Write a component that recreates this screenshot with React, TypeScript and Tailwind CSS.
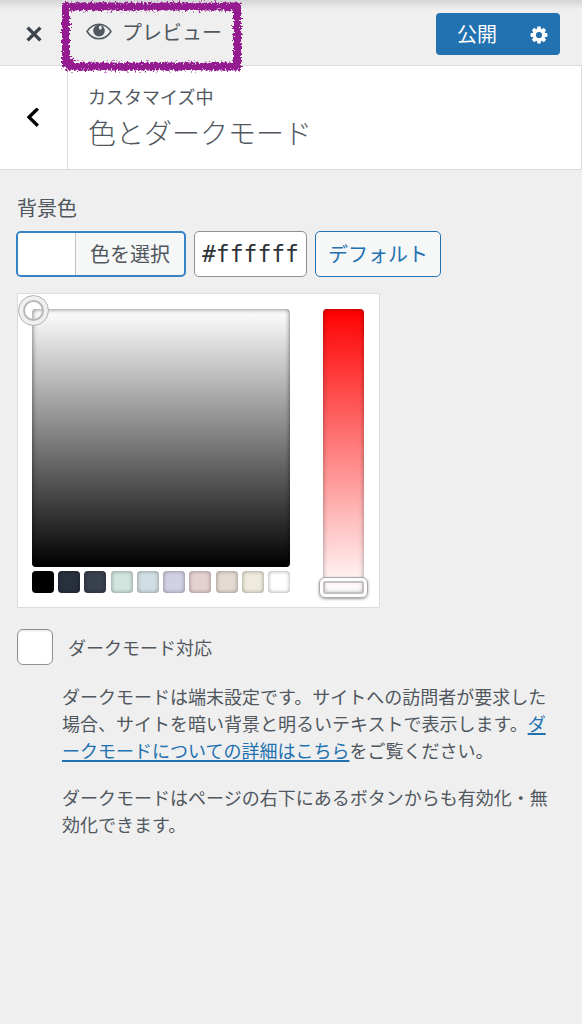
import React, { useState } from 'react';

const swatches = [
  { hex: '#000000', className: 'bg-[#000000]' },
  { hex: '#28303d', className: 'bg-[#28303d]' },
  { hex: '#39414d', className: 'bg-[#39414d]' },
  { hex: '#d1e4dd', className: 'bg-[#d1e4dd]' },
  { hex: '#d1dfe4', className: 'bg-[#d1dfe4]' },
  { hex: '#d1d1e4', className: 'bg-[#d1d1e4]' },
  { hex: '#e4d1d1', className: 'bg-[#e4d1d1]' },
  { hex: '#e4dad1', className: 'bg-[#e4dad1]' },
  { hex: '#eeeadd', className: 'bg-[#eeeadd]' },
  { hex: '#ffffff', className: 'bg-[#ffffff]' },
];

const CloseIcon: React.FC = () => (
  <svg width="16" height="16" viewBox="0 0 16 16" fill="none" stroke="#3c434a" strokeWidth="3.4" aria-hidden="true">
    <path d="M1.6 1.6 14.4 14.4M14.4 1.6 1.6 14.4" />
  </svg>
);

const BackIcon: React.FC = () => (
  <svg width="14" height="20" viewBox="0 0 14 20" fill="none" stroke="#000" strokeWidth="3.4" aria-hidden="true">
    <path d="M10.8 .6 2 9.2 10.8 17.8" />
  </svg>
);

const EyeIcon: React.FC = () => (
  <svg width="26" height="18" viewBox="0 0 26 18" aria-hidden="true">
    <path d="M1 8.5C4.2 3.5 8.2 1.2 13 1.2S21.8 3.5 25 8.5C21.8 13.5 17.8 15.8 13 15.8S4.2 13.5 1 8.5Z" fill="none" stroke="#50575e" strokeWidth="1.5" strokeLinejoin="round" />
    <circle cx="13" cy="7.6" r="5.8" fill="#50575e" />
    <ellipse cx="14.3" cy="4.8" rx="1.4" ry="2" fill="#efefef" />
  </svg>
);

const GearIcon: React.FC = () => (
  <svg width="18" height="18" viewBox="0 0 18 18" aria-hidden="true">
    <g fill="#fff">
      {[0, 45, 90, 135].map((angle) => (
        <path key={angle} d="M7.3 .6h3.4l.5 3.4v10l-.5 3.4H7.3l-.5-3.4V4Z" transform={`rotate(${angle} 9 9)`} />
      ))}
      <circle cx="9" cy="9" r="6.3" />
    </g>
    <circle cx="9" cy="9" r="3.1" fill="#2271b1" />
  </svg>
);

// Crayon outline around the preview button
const CrayonFrame: React.FC = () => (
  <svg className="absolute left-0 top-0 pointer-events-none z-10" width="184" height="76" viewBox="0 0 184 76" aria-hidden="true">
    <defs>
      <filter id="crayon" x="0" y="0" width="184" height="76" filterUnits="userSpaceOnUse" colorInterpolationFilters="sRGB">
        <feTurbulence type="fractalNoise" baseFrequency="0.5" numOctaves="2" seed="7" result="noise" />
        <feDisplacementMap in="SourceGraphic" in2="noise" scale="8" xChannelSelector="R" yChannelSelector="G" />
      </filter>
    </defs>
    <path
      d="M7 8.5H178V68.5H10.5V64.5H7Z"
      fill="none"
      stroke="#951b91"
      strokeWidth="8"
      filter="url(#crayon)"
    />
  </svg>
);

const Header: React.FC = () => (
  <header className="relative flex items-center justify-between h-[66px] pr-[22px] border-b border-[#dcdcde] bg-linear-to-b from-[#d4d5d7] via-[#efefef] via-15% to-[#efefef]">
    <div className="flex items-center h-full">
      <button type="button" aria-label="閉じる" className="flex items-center justify-center w-[68px] h-full pt-0.5">
        <CloseIcon />
      </button>
      <button type="button" className="flex items-center gap-2.5 pl-[18px] pb-0.5 text-xl leading-none text-[#50575e]">
        <EyeIcon />
        プレビュー
      </button>
    </div>
    <div className="flex h-[42px] mt-[3px] rounded bg-[#2271b1] text-white">
      <button type="button" className="pl-[21px] pr-3 text-xl leading-none">公開</button>
      <button type="button" aria-label="公開設定" className="flex items-center justify-center w-[51px] pl-2 pt-0.5">
        <GearIcon />
      </button>
    </div>
    <div className="absolute left-[59px] -top-0.5">
      <CrayonFrame />
    </div>
  </header>
);

const SectionTitle: React.FC = () => (
  <div className="flex h-[104px] bg-white border-b border-r border-[#dcdcde]">
    <button type="button" aria-label="戻る" className="flex items-center justify-center w-[68px] border-r border-[#dcdcde]">
      <BackIcon />
    </button>
    <h1 className="flex flex-col pl-5 pt-4 text-[#50575e]">
      <span className="text-lg leading-7 font-normal">カスタマイズ中</span>
      <span className="text-[28px] leading-[44px] font-light">色とダークモード</span>
    </h1>
  </div>
);

const ColorPicker: React.FC<{ onPick: (hex: string) => void }> = ({ onPick }) => (
  <div className="flex w-fit mt-4 gap-[33px] px-3.5 pt-[15px] pb-3.5 h-[315px] bg-white border border-[#dcdcde]">
    <div className="flex flex-col justify-between w-[258px]">
      <div className="relative h-[258px] rounded-sm bg-linear-to-b/srgb from-white to-black shadow-[inset_0_0_5px_rgba(0,0,0,0.6)]">
        <button
          type="button"
          aria-label="彩度と明度"
          className="absolute -left-3.5 -top-3.5 size-[31px] rounded-full border border-[#b4b4b4] bg-transparent shadow-[inset_0_0_0_4px_#f0f0f0,inset_0_0_0_6px_#b8b8b8]"
        />
      </div>
      <div className="flex justify-between">
        {swatches.map((s) => (
          <button
            key={s.hex}
            type="button"
            aria-label={s.hex}
            onClick={() => onPick(s.hex)}
            className={`size-[22px] rounded shadow-[inset_0_0_4px_rgba(0,0,0,0.4)] ${s.className}`}
          />
        ))}
      </div>
    </div>
    <div className="relative w-[41px] mr-px rounded-sm bg-linear-to-b/srgb from-[#ff0000] to-white shadow-[inset_0_0_5px_rgba(0,0,0,0.4)]">
      <input
        type="range"
        aria-label="彩度"
        min={0}
        max={100}
        defaultValue={100}
        className="absolute -left-1 top-0 w-[49px] h-[289px] appearance-none bg-transparent [writing-mode:vertical-lr] [&::-webkit-slider-thumb]:appearance-none [&::-webkit-slider-thumb]:w-[49px] [&::-webkit-slider-thumb]:h-[21px] [&::-webkit-slider-thumb]:rounded-md [&::-webkit-slider-thumb]:border [&::-webkit-slider-thumb]:border-[#aaaaaa] [&::-webkit-slider-thumb]:shadow-[inset_0_0_0_3px_#ffffff,inset_0_0_0_5px_#c4c0c0,0_1px_3px_rgba(0,0,0,0.4)]"
      />
    </div>
  </div>
);

const App: React.FC = () => {
  const [color, setColor] = useState('#ffffff');

  return (
    <div className="min-h-screen bg-[#efefef] text-[#50575e] font-['Noto_Sans_CJK_JP',sans-serif]">
      <Header />
      <SectionTitle />

      <main className="pl-[17px] pr-4 pt-6">
        {/* Background color */}
        <label htmlFor="bg-color" className="block text-xl leading-7">背景色</label>
        <div className="flex gap-2 mt-[9px] h-[46px]">
          <button type="button" className="flex -ml-px rounded-[5px] border-2 border-[#3582c4] bg-[#f6f7f7] overflow-hidden text-xl">
            <span className="w-[58px] h-full border-r border-[#c3c4c7]" style={{ backgroundColor: color }} />
            <span className="px-[14px] leading-[42px]">色を選択</span>
          </button>
          <input
            id="bg-color"
            type="text"
            value={color}
            onChange={(e) => setColor(e.target.value)}
            className="w-[113px] px-[7px] rounded-[5px] border border-[#8c8f94] bg-white text-[#2c3338] text-[23px] font-['DejaVu_Sans_Mono',monospace] outline-none"
          />
          <button
            type="button"
            onClick={() => setColor('#ffffff')}
            className="px-3 rounded-[5px] border border-[#2271b1] bg-[#f6f7f7] text-[#2271b1] text-xl leading-none"
          >
            デフォルト
          </button>
        </div>

        <ColorPicker onPick={setColor} />

        {/* Dark mode */}
        <div className="flex items-center gap-[15px] mt-[21px]">
          <input id="dark-mode" type="checkbox" className="appearance-none size-9 rounded-md border border-[#8c8f94] bg-white shadow-[inset_0_1px_2px_rgba(0,0,0,0.1)] checked:bg-[#2271b1]" />
          <label htmlFor="dark-mode" className="text-lg leading-7">ダークモード対応</label>
        </div>
        <div className="flex flex-col gap-5 mt-[18px] pl-[45px] pr-2 text-lg leading-[27px]">
          <p>
            ダークモードは端末設定です。サイトへの訪問者が要求した場合、サイトを暗い背景と明るいテキストで表示します。
            <a href="#dark-mode-help" className="text-[#2271b1] underline decoration-2 underline-offset-2">ダークモードについての詳細はこちら</a>
            をご覧ください。
          </p>
          <p>ダークモードはページの右下にあるボタンからも有効化・無効化できます。</p>
        </div>
      </main>
    </div>
  );
};

export default App;
